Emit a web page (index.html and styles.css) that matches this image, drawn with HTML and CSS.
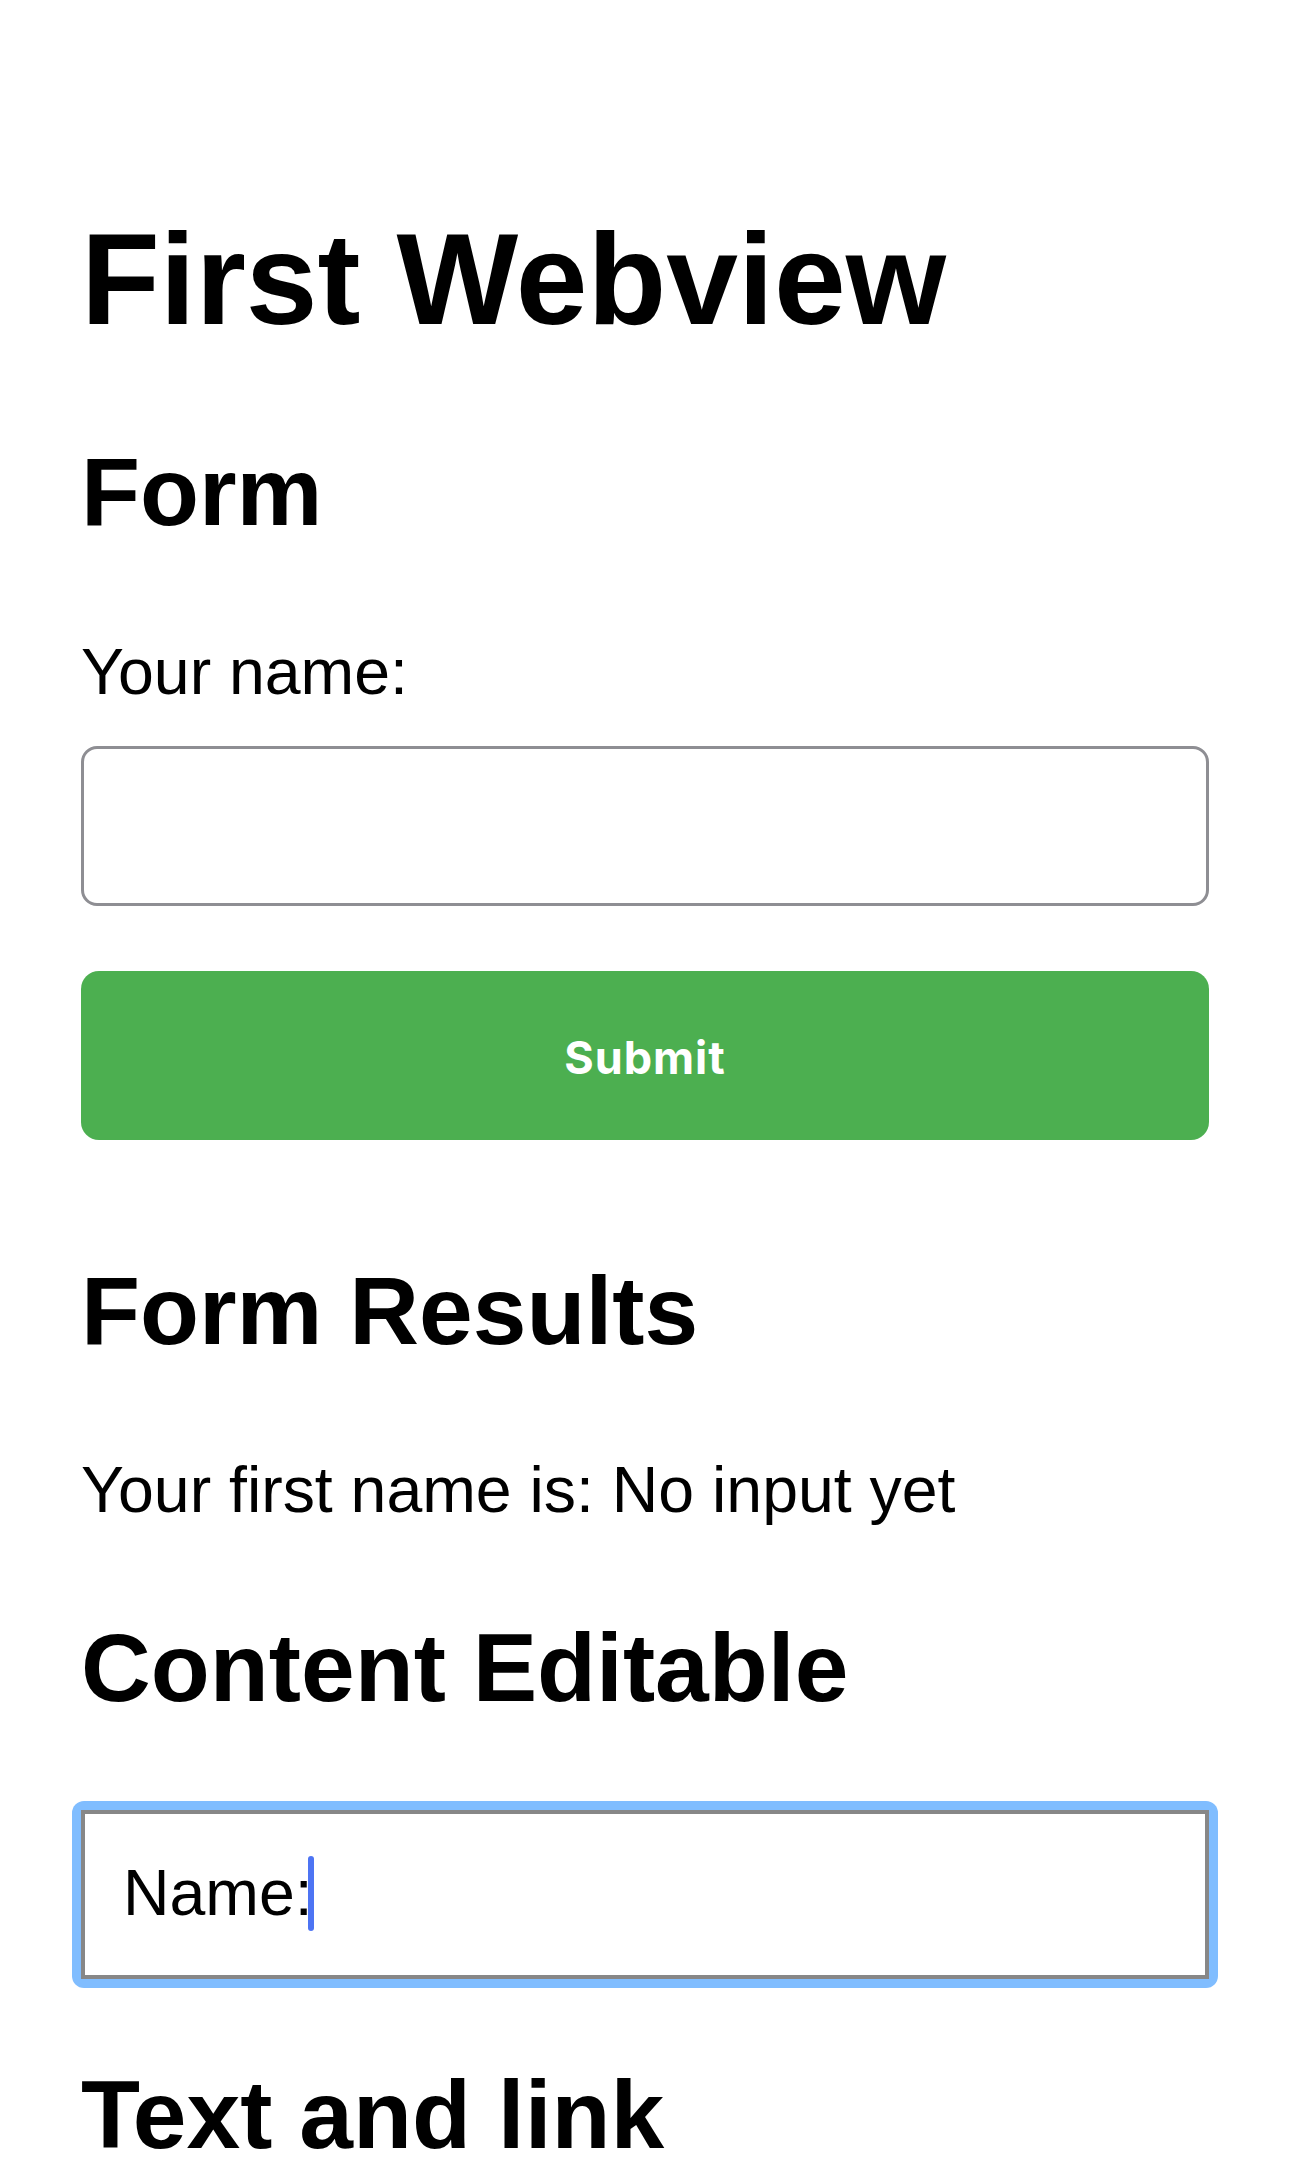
FILE: index.html
```html
<!DOCTYPE html>
<html lang="en">
<head>
<meta charset="utf-8">
<title>First Webview</title>
<link rel="stylesheet" href="styles.css">
</head>
<body>
<main class="page">
  <h1 class="title">First Webview</h1>

  <h2 class="heading heading-form">Form</h2>
  <form class="form" onsubmit="return false;">
    <label class="label" for="name">Your name:</label>
    <input class="text-input" id="name" type="text">
    <button class="submit" type="button">Submit</button>
  </form>

  <h2 class="heading heading-results">Form Results</h2>
  <p class="result">Your first name is: No input yet</p>

  <h2 class="heading heading-editable">Content Editable</h2>
  <div class="focus-ring">
    <div class="editable">Name:<span class="caret" aria-hidden="true"></span></div>
  </div>

  <h2 class="heading heading-text">Text and link</h2>
</main>
</body>
</html>
```

FILE: styles.css
```css
html, body {
  margin: 0;
  padding: 0;
  background: #ffffff;
}

body {
  font-family: "Liberation Sans", Arial, Helvetica, sans-serif;
  color: #000000;
}

.page {
  padding: 205px 81px 0;
  display: flex;
  flex-direction: column;
}

.title {
  margin: 0;
  font-size: 129px;
  line-height: 148px;
  font-weight: 700;
}

.heading {
  margin: 0;
  font-size: 96.6px;
  line-height: 110px;
  font-weight: 700;
}

.heading-form { margin-top: 84px; }
.heading-results { margin-top: 116px; }
.heading-editable { margin-top: 86px; }
.heading-text { margin-top: 72px; }

.form {
  display: flex;
  flex-direction: column;
  margin: 0;
}

.label {
  margin-top: 88px;
  font-size: 64.4px;
  line-height: 74px;
}

.text-input {
  margin: 37px 0 0;
  box-sizing: border-box;
  width: 100%;
  height: 160px;
  border: 3px solid #8e8e93;
  border-radius: 16px;
  background: #ffffff;
  padding: 0 30px;
  font-family: "Liberation Sans", Arial, sans-serif;
  font-size: 64px;
  outline: none;
}

.submit {
  margin-top: 65px;
  box-sizing: border-box;
  width: 100%;
  height: 169px;
  border: none;
  border-radius: 18px;
  background: #4caf50;
  color: #ffffff;
  font-family: Inter, "Noto Sans", sans-serif;
  font-weight: 700;
  font-size: 45px;
  letter-spacing: 1px;
  padding: 4px 0 0;
}

.result {
  margin: 87px 0 0;
  font-size: 64.4px;
  line-height: 74px;
}

.focus-ring {
  margin: 78px -9px 0;
  padding: 9px;
  background: #80bdff;
  border-radius: 12px;
}

.editable {
  box-sizing: border-box;
  height: 169px;
  border: 4px solid #878787;
  background: #ffffff;
  padding: 42px 38px 0;
  font-size: 64.4px;
  line-height: 74px;
  white-space: nowrap;
}

.caret {
  display: inline-block;
  width: 6px;
  height: 75px;
  margin-left: -5px;
  border-radius: 3px;
  background: #4d74f3;
  vertical-align: top;
}
```
